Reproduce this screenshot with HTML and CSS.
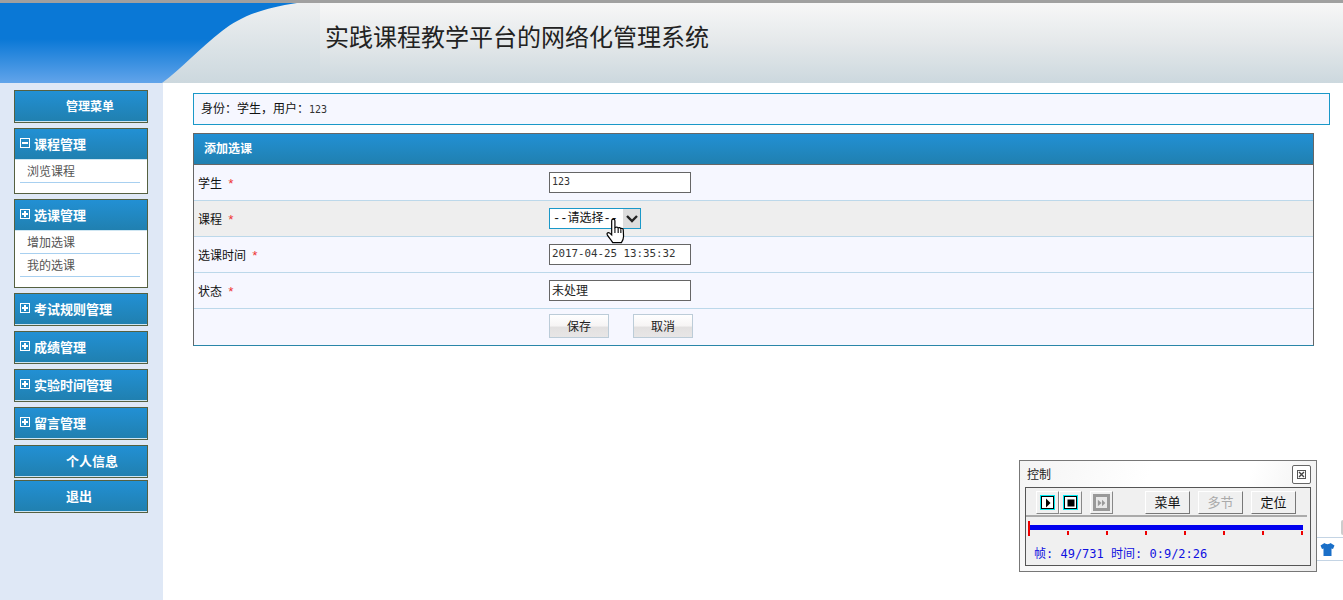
FILE: index.html
```html
<!DOCTYPE html>
<html lang="zh">
<head>
<meta charset="utf-8">
<title>实践课程教学平台的网络化管理系统</title>
<link rel="stylesheet" href="styles.css">
</head>
<body>
<header class="top">
  <svg class="top-art" width="320" height="80" viewBox="0 3 320 80" aria-hidden="true">
    <defs>
      <linearGradient id="blue" x1="0" y1="0" x2="0" y2="1">
        <stop offset="0" stop-color="#0a78d6"/>
        <stop offset=".45" stop-color="#0a78d6"/>
        <stop offset="1" stop-color="#62a4ea"/>
      </linearGradient>
      <linearGradient id="grey" x1="0" y1="0" x2="0" y2="1">
        <stop offset="0" stop-color="#eef0f1"/>
        <stop offset="1" stop-color="#ccd8de"/>
      </linearGradient>
    </defs>
    <rect y="3" width="320" height="80" fill="url(#grey)"/>
    <path d="M0 3H297C262 8 240 17 222 31C200 48 182 68 162 83H0Z" fill="url(#blue)"/>
  </svg>
  <h1 class="title">实践课程教学平台的网络化管理系统</h1>
</header>

<div class="layout">
  <nav class="side">
    <div class="menu"><div class="menu-head menu-head-center small">管理菜单</div></div>
    <div class="menu">
      <div class="menu-head"><span class="tog tog-minus"></span>课程管理</div>
      <ul class="menu-list"><li>浏览课程</li></ul>
    </div>
    <div class="menu">
      <div class="menu-head"><span class="tog tog-plus"></span>选课管理</div>
      <ul class="menu-list"><li>增加选课</li><li>我的选课</li></ul>
    </div>
    <div class="menu"><div class="menu-head"><span class="tog tog-plus"></span>考试规则管理</div></div>
    <div class="menu"><div class="menu-head"><span class="tog tog-plus"></span>成绩管理</div></div>
    <div class="menu"><div class="menu-head"><span class="tog tog-plus"></span>实验时间管理</div></div>
    <div class="menu"><div class="menu-head"><span class="tog tog-plus"></span>留言管理</div></div>
    <div class="menu"><div class="menu-head menu-head-center">个人信息</div></div>
    <div class="menu menu-tight"><div class="menu-head menu-head-center">退出</div></div>
  </nav>

  <main class="main">
    <div class="status">身份：学生，用户：<span class="mono">123</span></div>
    <section class="panel">
      <h2 class="panel-head">添加选课</h2>
      <div class="row"><div class="label">学生<span class="req">*</span></div><div class="field"><div class="input mono-in mono-small">123</div></div></div>
      <div class="row row-alt"><div class="label">课程<span class="req">*</span></div>
        <div class="field">
          <div class="select">
            <span class="select-text">--请选择--</span>
            <span class="select-btn"><svg width="14" height="10" viewBox="0 0 14 10"><path d="M2 2l5 5 5-5" fill="none" stroke="#222" stroke-width="2.4"/></svg></span>
            <svg class="hand" width="22" height="27" viewBox="0 0 20 25"><path d="M6 2.500c0-2 3-2 3 0V9l1-.4c1-.4 1.800 0 2 .6 1-.6 2-.2 2.300.6 1-.4 2.200 0 2.400 1l.3 6c0 3-1 4.500-2 6H7c-1-2-3-4-5-7-1-1.500.5-3 2-2l2 1.800Z" fill="#fff" stroke="#000" stroke-width="1.100"/><path d="M9 9v5M12 9.500V14M14.500 10.500V14" stroke="#000" fill="none"/></svg>
          </div>
        </div>
      </div>
      <div class="row"><div class="label">选课时间<span class="req">*</span></div><div class="field"><div class="input mono-in">2017-04-25 13:35:32</div></div></div>
      <div class="row"><div class="label">状态<span class="req">*</span></div><div class="field"><div class="input">未处理</div></div></div>
      <div class="row row-last"><div class="label"></div><div class="field btns"><button class="btn" type="button">保存</button><button class="btn" type="button">取消</button></div></div>
    </section>
  </main>
</div>

<aside class="ctrl">
  <div class="ctrl-title"><span>控制</span><span class="ctrl-x"><svg width="9" height="9" viewBox="0 0 9 9"><rect x=".5" y=".5" width="8" height="8" fill="none" stroke="#555"/><path d="M2 2l5 5M7 2l-5 5" stroke="#444" stroke-width="1.400"/></svg></span></div>
  <div class="ctrl-body">
    <div class="ctrl-tools">
      <div class="tool tool-on"><span class="glyph"><svg width="10" height="10" viewBox="0 0 10 10"><path d="M3 0.500l4.500 4.500-4.500 4.500Z" fill="#000"/></svg></span></div>
      <div class="tool tool-on"><span class="glyph"><svg width="10" height="10" viewBox="0 0 10 10"><rect x="1.500" y="1.500" width="7" height="7" fill="#000"/></svg></span></div>
      <div class="tool tool-off"><span class="glyph glyph-off"><svg width="10" height="10" viewBox="0 0 12 12"><path d="M1 2l4.500 4-4.500 4ZM6 2l4 4-4 4Z" fill="#999"/></svg></span></div>
      <div class="tbtn tbtn-first">菜单</div>
      <div class="tbtn tbtn-off">多节</div>
      <div class="tbtn">定位</div>
    </div>
    <div class="track">
      <div class="track-bar"></div>
      <i class="tick tick-start"></i>
      <div class="ticks"><i class="tick"></i><i class="tick"></i><i class="tick"></i><i class="tick"></i><i class="tick"></i><i class="tick"></i><i class="tick"></i></div>
    </div>
    <div class="ctrl-info">帧: 49/731 时间: 0:9/2:26</div>
  </div>
</aside>

<div class="skin"><svg width="15" height="15" viewBox="0 0 15 15"><path d="M4.500 1 0.500 3.500 2 7l1.500-.5V14h8V6.500L13 7l1.500-3.500L10.500 1C9.500 2.500 5.500 2.500 4.500 1Z" fill="#1a6fc8"/></svg></div>
</body>
</html>
```
FILE: styles.css
```css
* { box-sizing: border-box; }
html, body { margin: 0; height: 600px; overflow: hidden; }
body {
  font-family: "Noto Sans CJK SC", "Liberation Sans", sans-serif;
  font-size: 12px;
  color: #111;
  background: #fff;
  position: relative;
}

/* Header */
.top {
  position: relative;
  height: 83px;
  padding-left: 325px;
  border-top: 3px solid #a0a0a0;
  background: linear-gradient(#f7f7f7, #e4e8ea 50%, #ccd8de);
}
.top-art { position: absolute; left: 0; top: 0; }
.title {
  position: relative;
  margin: 0;
  font-size: 24px;
  font-weight: 400;
  line-height: 66px;
  color: #222;
}

/* Layout */
.layout { display: flex; height: 517px; }
.side {
  flex: 0 0 163px;
  padding: 7px 15px 0 14px;
  background: #dfe8f6;
  display: flex;
  flex-direction: column;
  gap: 5px;
}
.menu { border: 1px solid #556040; background: #fff; }
.menu-tight { margin-top: -3px; }
.menu-head {
  height: 31px;
  padding: 0 0 3px 5px;
  display: flex;
  align-items: center;
  font-size: 13px;
  font-weight: 700;
  color: #fff;
  background: linear-gradient(#2290d4, #2080b0) no-repeat top / 100% 30px;
  background-color: #cfe6f2;
}
.menu-head-center { padding-left: 51px; }
.small { font-size: 12px; }
.tog {
  width: 10px;
  height: 10px;
  margin-right: 4px;
  border: 1px solid #fff;
  position: relative;
  flex: none;
}
.tog::before {
  content: "";
  position: absolute;
  left: 1px;
  right: 1px;
  top: 3px;
  height: 2px;
  background: #fff;
}
.tog-plus::after {
  content: "";
  position: absolute;
  top: 1px;
  bottom: 1px;
  left: 3px;
  width: 2px;
  background: #fff;
}
.menu-list { list-style: none; margin: 0; padding: 0 7px 10px 5px; }
.menu-list li {
  height: 23px;
  line-height: 22px;
  padding-left: 7px;
  color: #555;
  border-bottom: 1px solid #a8d0f0;
}

/* Main */
.main { flex: 1; padding: 10px 13px 0 30px; }
.status {
  height: 32px;
  padding-left: 7px;
  line-height: 27px;
  background: #f6f7ff;
  border: 1px solid #1a98c8;
  color: #111;
}
.mono { font-family: "DejaVu Sans Mono", monospace; font-size: 10px; color: #333; }
.panel {
  width: 1121px;
  margin-top: 8px;
  border: 1px solid #666;
  border-bottom-color: #2a86a8;
  background: #f6f7ff;
}
.panel-head {
  margin: 0;
  height: 31px;
  padding-left: 10px;
  line-height: 28px;
  font-size: 12px;
  font-weight: 700;
  color: #fff;
  background: linear-gradient(#2290d4, #2080b0);
  border-bottom: 1px solid #666;
}
.row {
  height: 36px;
  display: flex;
  align-items: center;
  border-bottom: 1px solid #bcd8ea;
}
.row-alt { background: #eee; }
.row-last { border-bottom: 0; height: 36px; }
.label { flex: 0 0 355px; padding-left: 4px; }
.req { color: #e33; margin-left: 5px; font-family: "Liberation Mono", monospace; font-size: 13px; }
.field { display: flex; }
.input {
  width: 142px;
  height: 21px;
  padding-left: 2px;
  line-height: 18px;
  background: #fff;
  border: 1px solid #666;
  color: #222;
}
.mono-in { font-family: "DejaVu Sans Mono", monospace; font-size: 10.800px; color: #333; }
.mono-small { font-size: 10px; }

.select {
  position: relative;
  width: 92px;
  height: 21px;
  display: flex;
  background: #fff;
  border: 1px solid #1a98c8;
}
.select-text {
  flex: 1;
  padding-left: 3px;
  font-family: "Liberation Mono", "Noto Sans CJK SC", monospace;
  line-height: 20px;
}
.select-btn {
  width: 17px;
  background: #ddd;
  display: flex;
  align-items: center;
  justify-content: center;
}
.hand { position: absolute; left: 55px; top: 9px; }

.btns { gap: 24px; margin-bottom: 2px; }
.btn {
  width: 60px;
  height: 24px;
  padding: 0 0 2px;
  font: inherit;
  color: #222;
  border: 1px solid #bcccd8;
  background: linear-gradient(#fff, #f6f4f4 50%, #e2e0e0 55%, #e8e6e6);
}

/* Floating player window */
.ctrl {
  position: absolute;
  left: 1019px;
  top: 460px;
  width: 298px;
  height: 112px;
  padding: 0 5px;
  background: linear-gradient(110deg, #f4f4f4, #fff 40%, #fff 70%, #ececec);
  border: 1px solid #777;
}
.ctrl-title {
  height: 26px;
  padding: 3px 0 0 2px;
  display: flex;
  justify-content: space-between;
  line-height: 20px;
  color: #222;
}
.ctrl-x {
  width: 19px;
  height: 19px;
  margin-top: 1px;
  display: flex;
  align-items: center;
  justify-content: center;
  background: #fff;
  border: 1px solid #666;
  border-radius: 2px;
}
.ctrl-body {
  height: 79px;
  background: #f0f0f0;
  border: 1px solid #555;
}
.ctrl-tools {
  height: 29px;
  padding: 3px 0 0 10px;
  margin-right: 3px;
  display: flex;
  border-bottom: 2px solid #aaa;
}
.tool {
  width: 23px;
  height: 23px;
  display: flex;
  align-items: center;
  justify-content: center;
  background: #f0f0f0;
  border: 1px solid;
  border-color: #fff #888 #888 #fff;
}
.tool-off { margin-left: 8px; }
.glyph {
  width: 15px;
  height: 15px;
  display: flex;
  align-items: center;
  justify-content: center;
  background: #fff;
  border: 1px solid #00e8f0;
  box-shadow: inset 0 0 0 1px #000;
}
.glyph-off { width: 17px; height: 17px; border: 3px solid #999; box-shadow: none; background: #e8e8e8; }
.tbtn {
  width: 45px;
  height: 23px;
  margin-left: 8px;
  font-size: 13px;
  text-align: center;
  line-height: 20px;
  color: #111;
  background: #f0f0f0;
  border: 1px solid;
  border-color: #fff #777 #777 #fff;
}
.tbtn-first { margin-left: 32px; }
.tbtn-off { color: #aaa; }
.track { position: relative; height: 20px; margin: 4px 7px 0 3px; }
.track-bar { height: 5px; background: #0000ee; position: relative; top: 4px; }
.tick { display: block; width: 2px; height: 4px; background: #e00; }
.tick-start { position: absolute; left: -1px; top: 0; height: 15px; }
.ticks {
  position: absolute;
  left: 38px;
  right: 0;
  top: 10px;
  display: flex;
  justify-content: space-between;
}
.ctrl-info {
  padding: 4px 0 0 8px;
  font-family: "DejaVu Sans Mono", "Noto Sans CJK SC", monospace;
  font-size: 12px;
  line-height: 18px;
  color: #1010e0;
}

.skin {
  position: absolute;
  left: 1317px;
  top: 537px;
  width: 26px;
  height: 24px;
  padding: 4px 0 0 3px;
  background: #fff;
  border: solid #c4d4e4;
  border-width: 1px 0;
}
.skin::before {
  content: "";
  position: absolute;
  right: 0;
  top: -18px;
  width: 2px;
  height: 15px;
  border-radius: 2px 0 0 2px;
  background: #ccc;
}
```
